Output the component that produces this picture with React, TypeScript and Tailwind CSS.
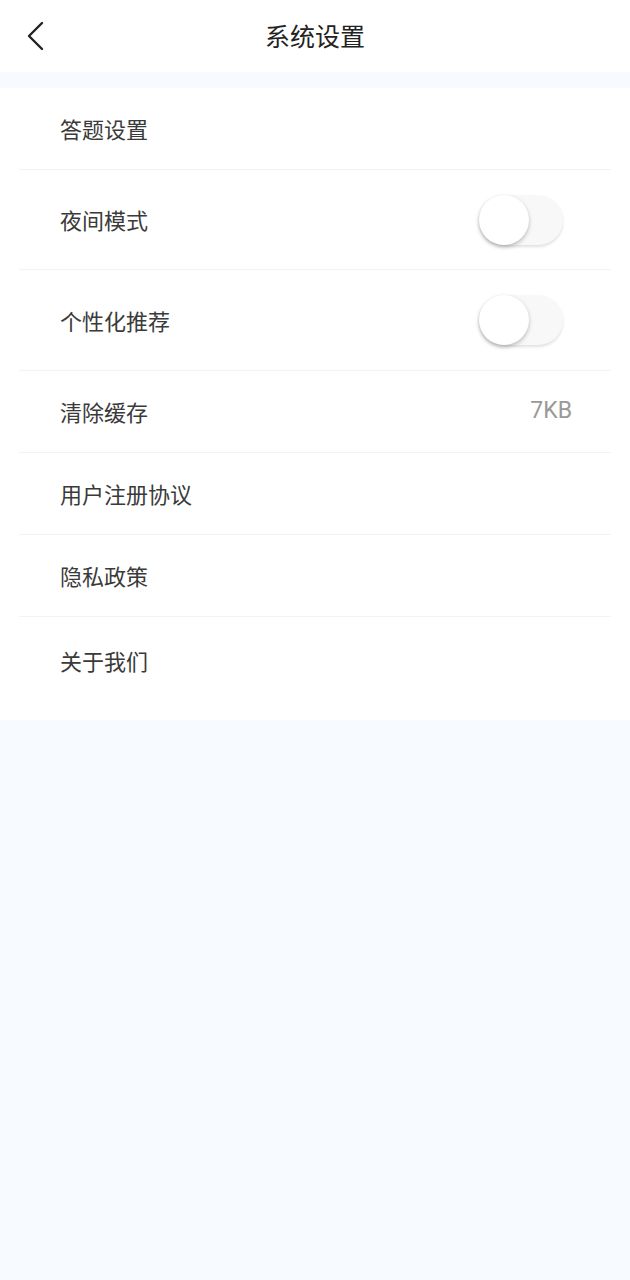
import type { ReactNode } from "react";

const font = { fontFamily: '"Noto Sans CJK SC", "Noto Sans", sans-serif' };

function Toggle() {
  return (
    <div className="relative mr-[9px] h-[50px] w-[84px] rounded-full bg-[#f8f8f8] shadow-[0_2px_3px_rgba(0,0,0,0.12)]">
      <div className="absolute left-0 top-0 h-[50px] w-[50px] rounded-full bg-white shadow-[0_2px_4px_rgba(0,0,0,0.25)]" />
    </div>
  );
}

function Row({ label, right, h, last }: { label: string; right?: ReactNode; h: string; last?: boolean }) {
  return (
    <div className={`mx-[19px] flex items-center justify-between pl-[41px] pr-[39px] ${h} ${last ? "" : "border-b border-[#f2f3f5]"}`}>
      <span className="text-[22px] text-[#3a3a3a]">{label}</span>
      {right}
    </div>
  );
}

export default function App() {
  return (
    <div className="min-h-[1280px] bg-[#f7fafe]" style={font}>
      {/* Header */}
      <header className="relative flex h-[72px] items-center justify-center bg-white">
        <svg className="absolute left-[24px] top-[21px]" width="22" height="30" viewBox="0 0 22 30" fill="none">
          <path d="M18 2 L5 15 L18 28" stroke="#222" strokeWidth="2.4" strokeLinecap="round" strokeLinejoin="round" />
        </svg>
        <h1 className="text-[25px] text-[#222222]">系统设置</h1>
      </header>

      {/* Settings list */}
      <section className="mt-[16px] bg-white pb-[17px]">
        <Row label="答题设置" h="h-[82px]" />
        <Row label="夜间模式" h="h-[100px]" right={<Toggle />} />
        <Row label="个性化推荐" h="h-[101px]" right={<Toggle />} />
        <Row
          label="清除缓存"
          h="h-[82px]"
          right={<span className="text-[23px] text-[#999999]" style={{ fontFamily: 'Roboto, sans-serif' }}>7KB</span>}
        />
        <Row label="用户注册协议" h="h-[82px]" />
        <Row label="隐私政策" h="h-[82px]" />
        <Row label="关于我们" h="h-[86px]" last />
      </section>
    </div>
  );
}
